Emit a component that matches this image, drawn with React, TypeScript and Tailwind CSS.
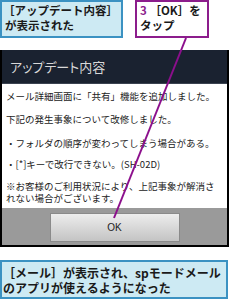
export default function App() {
  const font = "font-['Noto_Sans_CJK_JP','Noto_Sans',sans-serif]";

  return (
    <div className={`relative w-[229px] h-[300px] overflow-hidden bg-white ${font}`}>
      {/* callouts */}
      <div className="flex h-[50px] items-start">
        <div className="w-[123px] h-[38px] border-2 border-[#3b92c2] bg-[#cdeaf3] pl-[1px] pt-[1px] text-[11.5px] font-bold leading-[15px] text-[#1a1a1a] whitespace-nowrap">
          <div>［アップデート内容］</div>
          <div className="pl-[2px]">が表示された</div>
        </div>
        <div className="ml-[12px] w-[74px] h-[38px] border-2 border-[#8c1d8c] bg-white px-[3px] pt-[1px] text-[11.5px] font-bold leading-[15px] text-[#1a1a1a] whitespace-nowrap">
          <div>
            <span className="text-[#8c1d8c]">3</span> ［OK］を
          </div>
          <div>タップ</div>
        </div>
      </div>

      {/* phone screen */}
      <div className="flex h-[197px] flex-col bg-black px-[2px]">
        <div className="flex h-[33px] items-center bg-[#1a2230] px-[8px] text-[13px] text-[#d8d8d8] [font-feature-settings:'palt']">
          アップデート内容
        </div>
        <div className="h-[1px] bg-[#3a4250]" />
        <div className="flex h-[124px] flex-col bg-white px-[4px] pt-[6px] text-[9.5px] leading-[12px] text-[#222]">
          <div>メール詳細画面に「共有」機能を追加しました。</div>
          <div className="mt-[11px]">下記の発生事象について改修しました。</div>
          <div className="mt-[12px]">・フォルダの順序が変わってしまう場合がある。</div>
          <div className="mt-[9px]">・[*]キーで改行できない。(SH-02D)</div>
          <div className="mt-[10px]">※お客様のご利用状況により、上記事象が解消さ</div>
          <div>れない場合がございます。</div>
        </div>
        <div className="flex h-[37px] items-start justify-center bg-[#9a9a9a] pt-[5px]">
          <div className="flex h-[29px] w-[130px] items-center justify-center border border-[#8a8a8a] bg-gradient-to-b from-[#ededed] to-[#c4c4c4] font-['Liberation_Sans',sans-serif] text-[10px] text-[#222]">
            OK
          </div>
        </div>
        <div className="h-[2px] bg-black" />
      </div>

      {/* bottom callout */}
      <div className="mt-[13px] h-[39px] w-[228px] border-2 border-[#3b92c2] bg-[#cdeaf3] pl-[1px] pt-[3px] text-[12px] font-bold leading-[15px] text-[#1a1a1a] whitespace-nowrap">
        <div>［メール］が表示され、spモードメール</div>
        <div>のアプリが使えるようになった</div>
      </div>

      {/* pointer line */}
      <svg className="pointer-events-none absolute left-0 top-0" width="229" height="300">
        <line x1="186" y1="38" x2="114" y2="218" stroke="#8c0f8c" strokeWidth="2" />
      </svg>
    </div>
  );
}
